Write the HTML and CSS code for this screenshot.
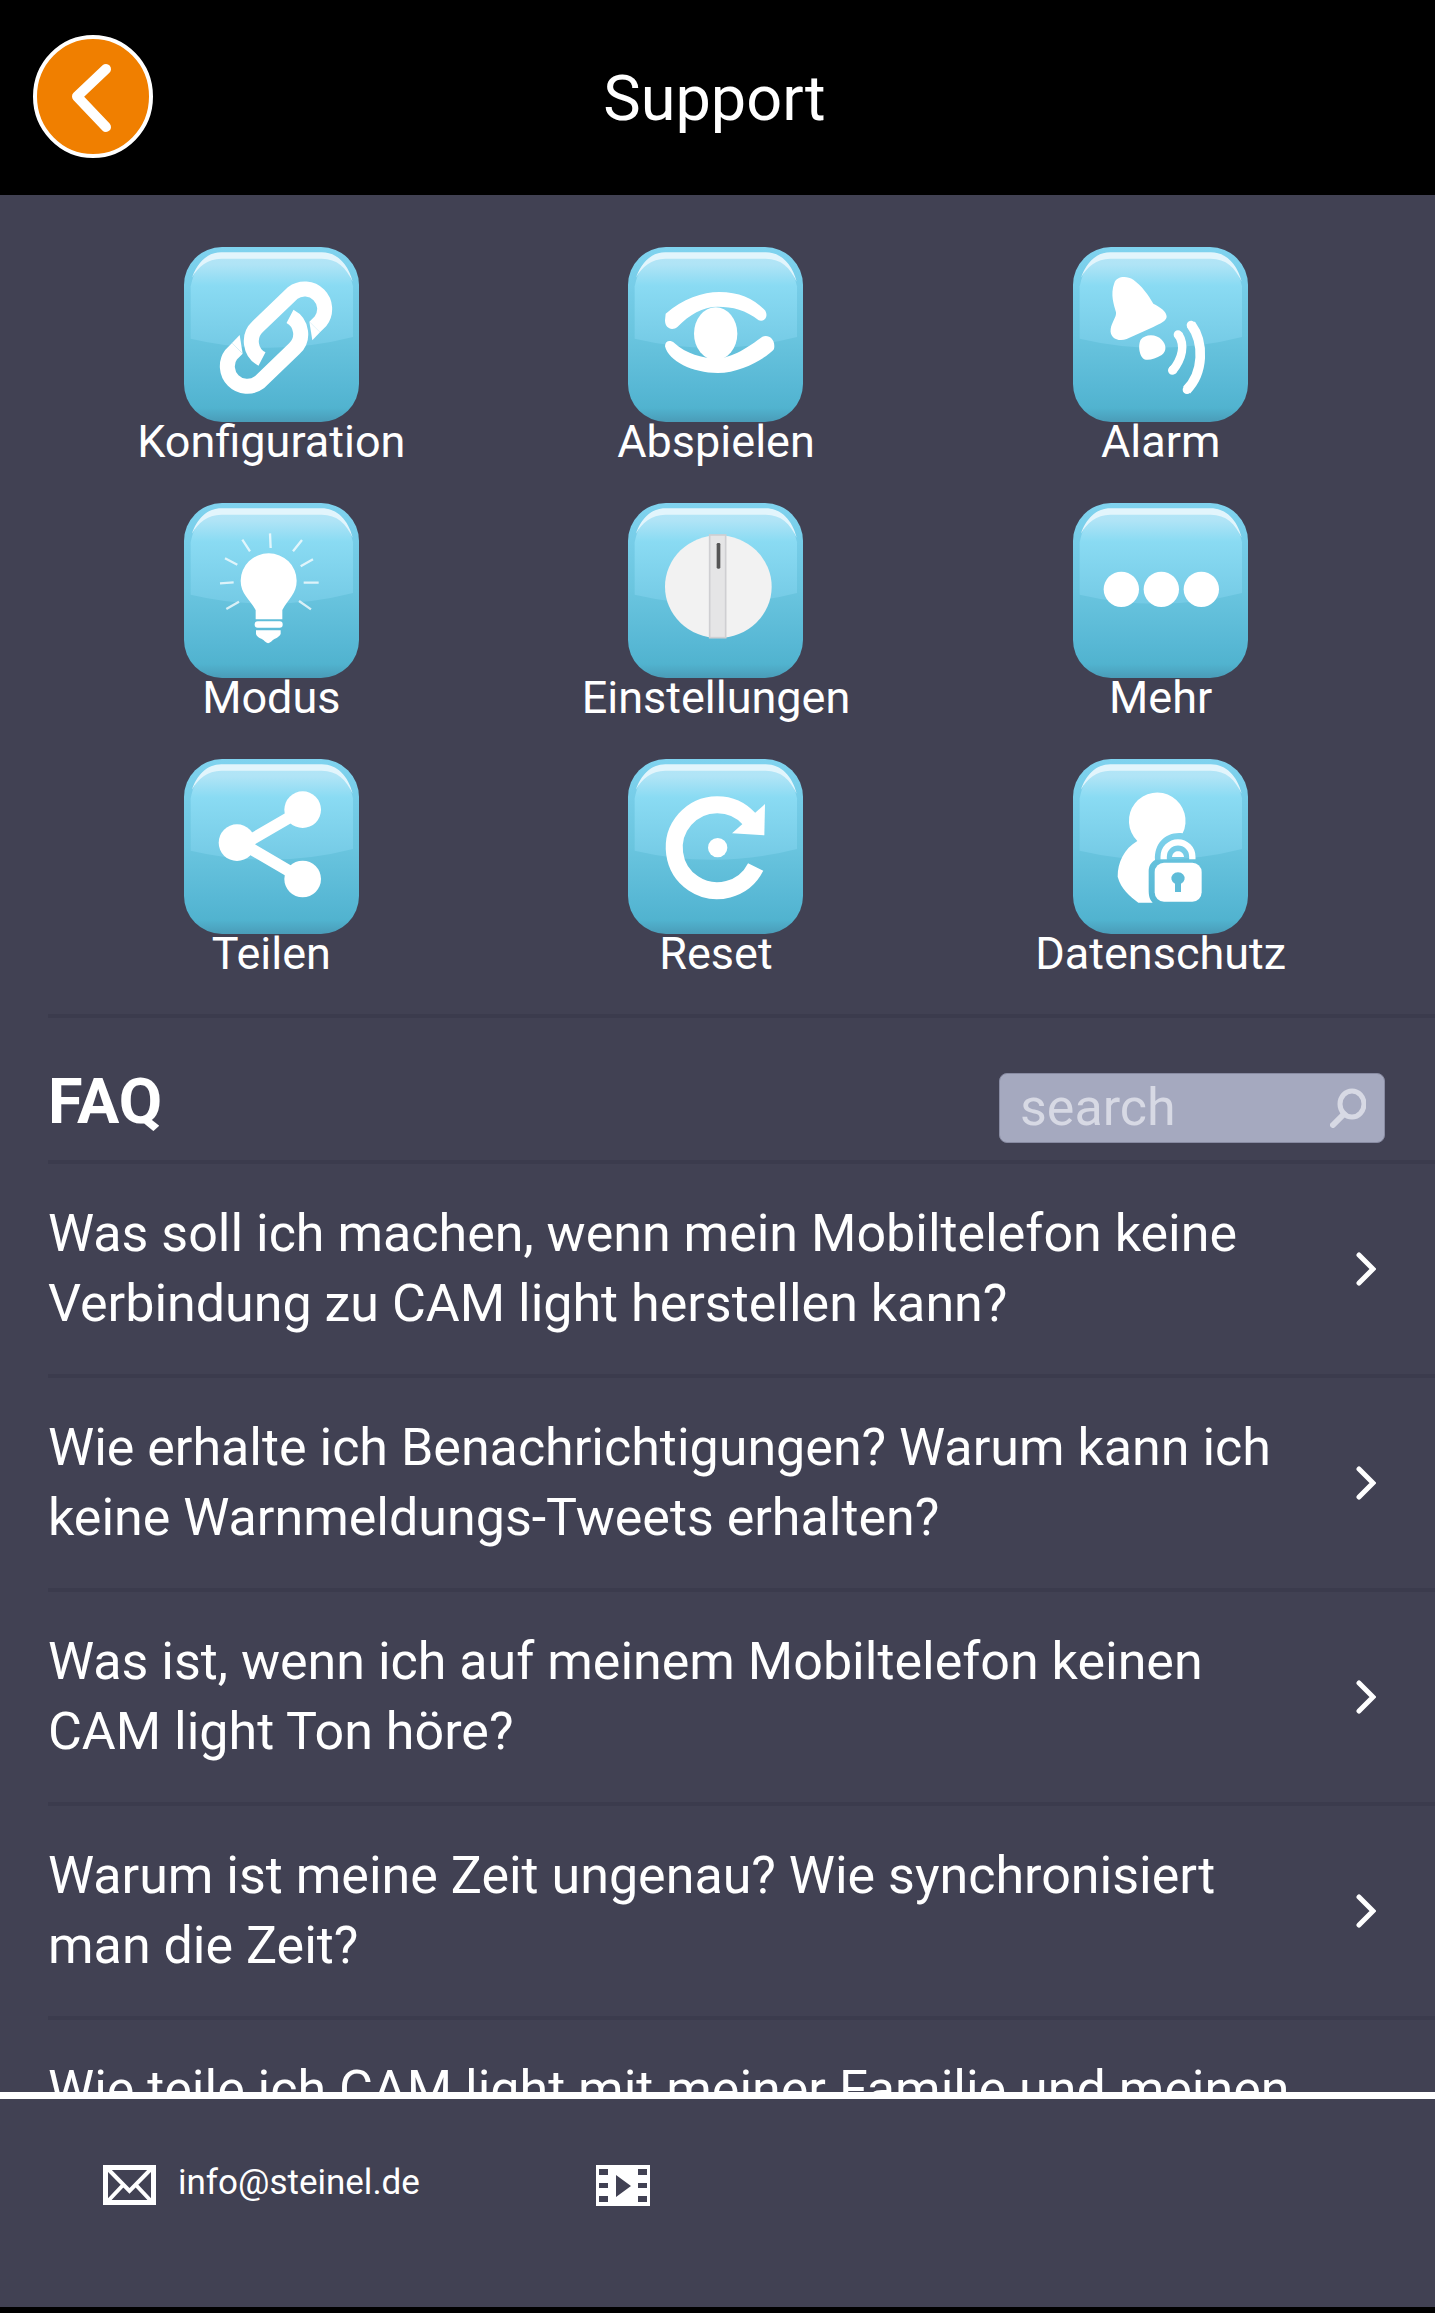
FILE: index.html
```
<!DOCTYPE html>
<html lang="de">
<head>
  <meta charset="UTF-8">
  <meta name="viewport" content="width=device-width, initial-scale=1.0">
  <title>Support</title>
  <link rel="stylesheet" href="styles.css">
</head>
<body>
  <!-- shared tile background -->
  <svg class="defs" width="0" height="0" aria-hidden="true">
    <defs>
      <linearGradient id="base" x1="0" y1="0" x2="0" y2="1">
        <stop offset="0" stop-color="#80d3ef"/>
        <stop offset="0.5" stop-color="#6ac5df"/>
        <stop offset="0.8" stop-color="#58b8d5"/>
        <stop offset="0.92" stop-color="#51b3cf"/>
        <stop offset="1" stop-color="#4a9cb8"/>
      </linearGradient>
      <linearGradient id="gloss" x1="0" y1="0" x2="0" y2="1">
        <stop offset="0" stop-color="#b5e6f7"/>
        <stop offset="0.12" stop-color="#b0e4f6"/>
        <stop offset="0.34" stop-color="#8adbf3"/>
        <stop offset="1" stop-color="#74cae5"/>
      </linearGradient>
      <symbol id="tile" viewBox="0 0 525 525">
        <rect width="525" height="525" rx="114" fill="url(#base)"/>
        <path d="M20 118C32 60 60 18 112 18H413C465 18 493 60 507 118V270Q264 332 20 275Z" fill="url(#gloss)"/>
        <path d="M24 92C38 50 68 16 112 16H413C460 16 493 52 506 104C486 62 460 35 413 35H112C70 35 42 60 24 92Z" fill="#e2f5fc"/>
      </symbol>
    </defs>
  </svg>

  <header class="header">
    <button class="back-btn" type="button" aria-label="Zurück">
      <svg viewBox="0 0 120 123" aria-hidden="true">
        <ellipse cx="60" cy="61.5" rx="58" ry="59.5" fill="#f07f00" stroke="#fff" stroke-width="4"/>
        <path d="M73 34L44 61.5L73 92" fill="none" stroke="#fff" stroke-width="10" stroke-linecap="round" stroke-linejoin="round"/>
      </svg>
    </button>
    <h1>Support</h1>
  </header>

  <main class="content">
    <!-- topics -->
    <nav class="topics">
      <a class="topic" href="#konfiguration">
        <svg viewBox="0 0 525 525" aria-hidden="true">
          <use href="#tile"/>
          <g id="link" fill="none" stroke="#fff" stroke-width="45">
            <path d="M392 240L410 222A60 60 0 0 0 326 138L221 239A60 60 0 0 0 234 336"/>
            <path d="M376 224L408 256L385 280Z" fill="#fff" stroke="none"/>
          </g>
          <use href="#link" transform="rotate(180 276 272)"/>
        </svg>
        <span>Konfiguration</span>
      </a>
      <a class="topic" href="#abspielen">
        <svg viewBox="0 0 525 525" aria-hidden="true">
          <use href="#tile"/>
          <g transform="translate(-176 -52)" fill="#fff">
            <path d="M289 252C340 208 400 187 450 187C510 187 555 208 588 243C598 262 585 278 568 272C530 241 490 231 445 231C400 231 360 255 325 291C310 304 287 298 287 272Z"/>
            <path d="M287 350C287 333 303 330 315 340C350 372 400 386 440 386C490 386 540 350 578 322C598 312 620 330 614 358C600 378 520 430 445 430C370 430 298 395 287 350Z"/>
            <ellipse cx="439" cy="312" rx="65" ry="79"/>
          </g>
        </svg>
        <span>Abspielen</span>
      </a>
      <a class="topic" href="#alarm">
        <svg viewBox="0 0 525 525" aria-hidden="true">
          <use href="#tile"/>
          <g transform="translate(-159 -52)" fill="#fff">
            <path d="M283 160C290 139 320 137 340 150C365 168 385 195 400 222C420 232 440 245 440 262C437 275 425 280 400 292L320 328C295 338 268 325 272 298C275 278 290 262 288 248C282 225 270 195 283 160Z"/>
            <path d="M362 330C375 312 410 312 425 330C440 345 440 365 425 376C408 386 390 392 378 390C360 388 352 350 362 330Z"/>
            <g fill="none" stroke="#fff">
              <path d="M475 314C495 345 488 385 457 424" stroke-width="26"/>
              <path d="M513 284C554 340 550 430 500 481" stroke-width="29"/>
              <path d="M474 315L476 317M513 286L515 289M459 420L457 422M503 478L501 480" stroke-width="26" stroke-linecap="round"/>
            </g>
          </g>
        </svg>
        <span>Alarm</span>
      </a>
      <a class="topic" href="#modus">
        <svg viewBox="0 0 525 525" aria-hidden="true">
          <use href="#tile"/>
          <g transform="translate(-192 -39)" fill="#fff">
            <path d="M362 272A84 82 0 0 1 530 272C530 312 505 325 487 360V388H407V360C388 325 362 312 362 272Z"/>
            <rect x="404" y="394" width="84" height="19" rx="9"/>
            <path d="M408 421H482V432C475 445 462 445 455 454Q444 465 434 454C428 445 412 445 408 432Z"/>
            <path d="M450 130L452 174M367 149L390 184M546 150L519 184M315 205L352 224M579 208L542 229M300 280L341 277M551 278H596M319 357L357 335M537 333L573 358" stroke="#fff" stroke-opacity="0.75" stroke-width="7"/>
          </g>
        </svg>
        <span>Modus</span>
      </a>
      <a class="topic" href="#einstellungen">
        <svg viewBox="0 0 525 525" aria-hidden="true">
          <use href="#tile"/>
          <g transform="translate(-176 -39)">
            <ellipse cx="447" cy="290" rx="160" ry="154" fill="#f2f2f2"/>
            <rect x="421" y="135" width="48" height="308" fill="#e5e5e6" stroke="#cfcfd2" stroke-width="5"/>
            <rect x="442" y="159" width="11" height="77" rx="4" fill="#555"/>
          </g>
        </svg>
        <span>Einstellungen</span>
      </a>
      <a class="topic" href="#mehr">
        <svg viewBox="0 0 525 525" aria-hidden="true">
          <use href="#tile"/>
          <g transform="translate(-159 -39)" fill="#fff">
            <circle cx="304" cy="298" r="53"/>
            <circle cx="424" cy="298" r="53"/>
            <circle cx="544" cy="298" r="53"/>
          </g>
        </svg>
        <span>Mehr</span>
      </a>
      <a class="topic" href="#teilen">
        <svg viewBox="0 0 525 525" aria-hidden="true">
          <use href="#tile"/>
          <g transform="translate(-192 -39)" fill="#fff">
            <path d="M548 191L370 295L548 399" fill="none" stroke="#fff" stroke-width="35"/>
            <circle cx="351" cy="290" r="55"/>
            <circle cx="548" cy="191" r="55"/>
            <circle cx="548" cy="399" r="55"/>
          </g>
        </svg>
        <span>Teilen</span>
      </a>
      <a class="topic" href="#reset">
        <svg viewBox="0 0 525 525" aria-hidden="true">
          <use href="#tile"/>
          <g transform="translate(-176 -39)" fill="#fff">
            <path d="M559 363A129 129 0 1 1 540 219" fill="none" stroke="#fff" stroke-width="51"/>
            <path d="M587 174L585 268L488 262Z"/>
            <circle cx="445" cy="305" r="29"/>
          </g>
        </svg>
        <span>Reset</span>
      </a>
      <a class="topic" href="#datenschutz">
        <svg viewBox="0 0 525 525" aria-hidden="true">
          <use href="#tile"/>
          <g transform="translate(-159 -39)" fill="#fff">
            <path d="M352 285A85 85 0 1 1 488 262C440 256 402 290 405 342C392 350 386 360 386 378V430C386 448 388 460 398 470H355C330 450 303 430 293 392C293 350 312 308 352 285Z"/>
            <path d="M431 340V332A43 43 0 0 1 517 332V340" fill="none" stroke="#fff" stroke-width="19"/>
            <path d="M456 333C458 310 490 310 492 333Z"/>
            <rect x="404" y="350" width="141" height="117" rx="28"/>
            <path d="M465 438V413A20 18 0 1 1 483 413V438Z" fill="#5fbcd8"/>
          </g>
        </svg>
        <span>Datenschutz</span>
      </a>
    </nav>

    <!-- faq -->
    <section class="faq">
      <div class="faq-head">
        <h2>FAQ</h2>
        <div class="search">
          <input type="text" placeholder="search" aria-label="search">
          <svg viewBox="0 0 36 40" aria-hidden="true">
            <g fill="none" stroke="#d7d9e4">
              <ellipse cx="22" cy="16" rx="12" ry="13" stroke-width="5"/>
              <path d="M14 26L3 37" stroke-width="6" stroke-linecap="round"/>
            </g>
          </svg>
        </div>
      </div>
      <ul class="faq-list">
        <li><a href="#faq1"><span>Was soll ich machen, wenn mein Mobiltelefon keine Verbindung zu CAM light herstellen kann?</span><svg viewBox="0 0 20 34" aria-hidden="true"><path d="M3 3L17 17L3 31"/></svg></a></li>
        <li><a href="#faq2"><span>Wie erhalte ich Benachrichtigungen? Warum kann ich keine Warnmeldungs-Tweets erhalten?</span><svg viewBox="0 0 20 34" aria-hidden="true"><path d="M3 3L17 17L3 31"/></svg></a></li>
        <li><a href="#faq3"><span>Was ist, wenn ich auf meinem Mobiltelefon keinen CAM light Ton höre?</span><svg viewBox="0 0 20 34" aria-hidden="true"><path d="M3 3L17 17L3 31"/></svg></a></li>
        <li><a href="#faq4"><span>Warum ist meine Zeit ungenau? Wie synchronisiert man die Zeit?</span><svg viewBox="0 0 20 34" aria-hidden="true"><path d="M3 3L17 17L3 31"/></svg></a></li>
        <li><a href="#faq5"><span>Wie teile ich CAM light mit meiner Familie und meinen</span></a></li>
      </ul>
    </section>
  </main>

  <footer class="footer">
    <a class="mail" href="mailto:info@steinel.de">
      <svg viewBox="0 0 53 40" aria-hidden="true">
        <g fill="none" stroke="#fff" stroke-width="4">
          <rect x="2.5" y="2.5" width="48" height="35" stroke-width="5"/>
          <path d="M5 4L26.5 26L48 4M5 36L21 19M48 36L32 19"/>
        </g>
      </svg>
      <span>info@steinel.de</span>
    </a>
    <a class="film" href="#video" aria-label="Video">
      <svg viewBox="0 0 54 41" aria-hidden="true">
        <path fill="#fff" fill-rule="evenodd" d="M0 0H54V41H0ZM3 4V10H12V4ZM3 18V23H12V18ZM3 31V37H12V31ZM42 4V10H51V4ZM42 18V23H51V18ZM42 31V37H51V31ZM20 10V32L35 21Z"/>
      </svg>
    </a>
  </footer>
</body>
</html>
```
FILE: styles.css
```
* {
  box-sizing: border-box;
}
body {
  margin: 0;
  height: 100vh;
  display: flex;
  flex-direction: column;
  font-family: Roboto, "Liberation Sans", sans-serif;
  background-color: #414153;
  color: #fff;
}
a {
  color: inherit;
  text-decoration: none;
}
svg {
  display: block;
  flex: none;
}
.defs {
  position: absolute;
}

/* header */
.header {
  display: grid;
  grid-template-columns: 1fr auto 1fr;
  align-items: center;
  padding: 35px 39px 37px 33px;
  background-color: #000;
}
.back-btn {
  width: 120px;
  height: 123px;
  padding: 0;
  border: none;
  background: none;
  cursor: pointer;
}
.header h1 {
  margin: 0;
  padding-top: 4px;
  font-size: 63px;
  line-height: 72px;
  font-weight: 400;
}

.content {
  flex: 1;
  min-height: 0;
  overflow: hidden;
}

/* topics */
.topics {
  display: grid;
  grid-template-columns: repeat(3, 1fr);
  row-gap: 41px;
  padding: 52px 52px 40px 49px;
}
.topic {
  display: flex;
  flex-direction: column;
  align-items: center;
  font-size: 45px;
  line-height: 40px;
}
.topic svg {
  width: 175px;
  height: 175px;
}

/* faq */
.faq {
  margin-left: 48px;
  border-top: 4px solid #3b3b4d;
}
.faq-head {
  display: flex;
  justify-content: space-between;
  align-items: flex-start;
  padding: 55px 50px 17px 0;
}
.faq-head h2 {
  margin: 0;
  font-size: 63px;
  line-height: 58px;
  font-weight: 700;
}
.search {
  display: flex;
  align-items: center;
  width: 386px;
  height: 70px;
  padding: 0 18px 0 20px;
  border: 1px solid #888ba2;
  border-radius: 8px;
  background-color: #a5a9bf;
}
.search input {
  flex: 1;
  min-width: 0;
  padding: 0;
  border: none;
  outline: none;
  background: none;
  color: #fff;
  font-family: inherit;
  font-size: 52px;
  line-height: 60px;
}
.search input::placeholder {
  color: #d7d9e4;
  opacity: 1;
}
.search svg {
  width: 36px;
  height: 40px;
}
.faq-list {
  margin: 0;
  padding: 0;
  list-style: none;
}
.faq-list li {
  border-top: 4px solid #3b3b4d;
}
.faq-list a {
  display: flex;
  align-items: center;
  justify-content: space-between;
  gap: 36px;
  padding: 35px 59px 35px 0;
  font-size: 52px;
  line-height: 70px;
}
.faq-list svg {
  width: 20px;
  height: 34px;
  fill: none;
  stroke: #fff;
  stroke-width: 5px;
  stroke-linecap: round;
}

/* footer */
.footer {
  display: flex;
  align-items: flex-start;
  gap: 176px;
  height: 221px;
  padding: 66px 103px 0;
  border-top: 7px solid #fff;
  border-bottom: 6px solid #000;
}
.mail {
  display: flex;
  align-items: flex-start;
  gap: 22px;
  font-size: 35px;
  line-height: 36px;
}
.mail svg {
  width: 53px;
  height: 40px;
}
.film svg {
  width: 54px;
  height: 41px;
}
```
